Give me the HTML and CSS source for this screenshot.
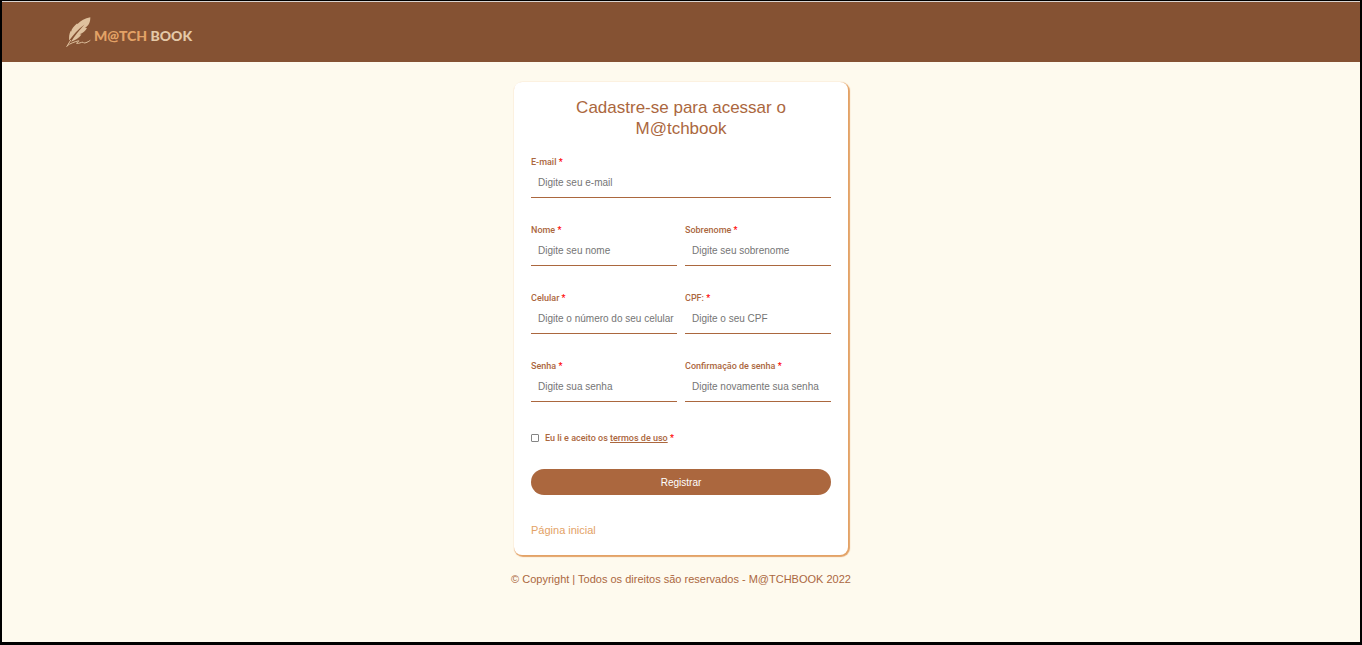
FILE: index.html
```html
<!DOCTYPE html>
<html lang="pt-BR">
<head>
<meta charset="utf-8">
<meta name="viewport" content="width=device-width, initial-scale=1">
<title>M@tchbook - Cadastro</title>
<link rel="stylesheet" href="styles.css">
</head>
<body class="page">
<header class="header">
  <a class="logo" href="#">
    <svg class="logo-feather" viewBox="0 0 28 32" width="28" height="32" aria-hidden="true">
      <path class="feather-fill" d="M24.300 1.200C19 2.500 14.500 4.500 11.500 8L11 7.500C8 10 5.500 13 5.200 15.500L4.600 15C3.200 18 2.800 21 3.200 24.500C7 19 12 13.500 18.500 8.500C13 14.500 8.500 20 5 25.800C9 24.500 13 22 15.500 18.500L13.500 18.300C17 17 19.500 15 21 12L19 11.800C22.500 10 24.500 6 24.300 1.200Z"/>
      <path class="feather-line" d="M4.500 24.500L.800 30.500M1.500 29.500C4 27.500 8 26 12.500 24.800C14.500 24.500 11 26.600 10.500 27.200C13 28 15 26 17 26.200C18 28 21.500 26.300 24 24.500"/>
    </svg>
    <span class="logo-text"><span class="logo-accent">M@TCH</span> BOOK</span>
  </a>
</header>
<main class="main">
  <form class="card">
    <h1 class="title">Cadastre-se para acessar o M@tchbook</h1>
    <div class="fields">
      <div class="field field-wide">
        <label class="label" for="email">E-mail <span class="required">*</span></label>
        <input class="input" id="email" type="email" placeholder="Digite seu e-mail">
      </div>
      <div class="field">
        <label class="label" for="nome">Nome <span class="required">*</span></label>
        <input class="input" id="nome" type="text" placeholder="Digite seu nome">
      </div>
      <div class="field">
        <label class="label" for="sobrenome">Sobrenome <span class="required">*</span></label>
        <input class="input" id="sobrenome" type="text" placeholder="Digite seu sobrenome">
      </div>
      <div class="field">
        <label class="label" for="celular">Celular <span class="required">*</span></label>
        <input class="input" id="celular" type="tel" placeholder="Digite o número do seu celular">
      </div>
      <div class="field">
        <label class="label" for="cpf">CPF: <span class="required">*</span></label>
        <input class="input" id="cpf" type="text" placeholder="Digite o seu CPF">
      </div>
      <div class="field">
        <label class="label" for="senha">Senha <span class="required">*</span></label>
        <input class="input" id="senha" type="password" placeholder="Digite sua senha">
      </div>
      <div class="field">
        <label class="label" for="confirmacao">Confirmação de senha <span class="required">*</span></label>
        <input class="input" id="confirmacao" type="password" placeholder="Digite novamente sua senha">
      </div>
    </div>
    <div class="terms">
      <input class="checkbox" id="termos" type="checkbox">
      <label class="label" for="termos">Eu li e aceito os <a class="terms-link" href="#">termos de uso</a> <span class="required">*</span></label>
    </div>
    <button class="submit" type="submit">Registrar</button>
    <a class="home-link" href="#">Página inicial</a>
  </form>
</main>
<footer class="footer">© Copyright | Todos os direitos são reservados - M@TCHBOOK 2022</footer>
</body>
</html>
```
FILE: styles.css
```css
* {
  box-sizing: border-box;
}

.page {
  display: flex;
  flex-direction: column;
  min-height: 100vh;
  margin: 0;
  border: 2px solid #000;
  border-top-width: 1px;
  border-bottom-width: 3px;
  background: #fefaee;
  color: #ab673e;
  font-family: "Liberation Sans", Arial, sans-serif;
}

.header {
  display: flex;
  align-items: center;
  height: 61px;
  padding: 0 64px;
  border-top: 1px solid #d9d5d2;
  background: #855233;
}

.logo {
  display: flex;
  align-items: center;
  color: #e4c9a8;
  text-decoration: none;
}

.logo-text {
  padding-top: 8px;
  font: 900 14px/16px Lato, sans-serif;
}

.logo-accent {
  color: #e3a266;
}

.feather-fill {
  fill: #dfc19e;
}

.feather-line {
  fill: none;
  stroke: #dfc19e;
  stroke-width: 1;
  stroke-linecap: round;
}

.main {
  display: flex;
  justify-content: center;
  padding: 20px 16px 16px;
}

.card {
  display: flex;
  flex-direction: column;
  width: 100%;
  max-width: 334px;
  padding: 15px 17px 17px;
  border-radius: 8px;
  background: #fff;
  box-shadow: 1px 1px 1px 1px #e3a266;
}

.title {
  margin: 0 32px 17px;
  font-size: 17px;
  font-weight: 400;
  line-height: 21px;
  text-align: center;
}

.fields {
  display: grid;
  grid-template-columns: 1fr 1fr;
  gap: 26px 8px;
}

.field {
  display: flex;
  flex-direction: column;
  min-width: 0;
}

.field-wide {
  grid-column: 1 / -1;
}

.label {
  font: 500 9px/12px Roboto, sans-serif;
}

.required {
  color: #f00;
}

.input {
  width: 100%;
  height: 30px;
  padding: 0 0 0 7px;
  border: 0;
  border-bottom: 1px solid #ab673e;
  background: transparent;
  color: #444;
  font: 10px "Liberation Sans", Arial, sans-serif;
}

.input::placeholder {
  color: #757575;
}

.terms {
  display: flex;
  align-items: center;
  gap: 6px;
  margin: 30px 0 25px;
}

.checkbox {
  width: 8px;
  height: 8px;
  margin: 0;
  appearance: none;
  border: 1px solid #858585;
  border-radius: 1px;
  background: #fff;
}

.checkbox:checked {
  background: #ab673e;
}

.terms-link {
  color: inherit;
}

.submit {
  height: 26px;
  border: 0;
  border-radius: 13px;
  background: #ab673e;
  color: #fff;
  font: 10px "Liberation Sans", Arial, sans-serif;
}

.home-link {
  align-self: flex-start;
  margin-top: 27px;
  color: #e3a266;
  font-size: 11px;
  line-height: 16px;
  text-decoration: none;
}

.footer {
  font-size: 11px;
  line-height: 16px;
  text-align: center;
}
```
